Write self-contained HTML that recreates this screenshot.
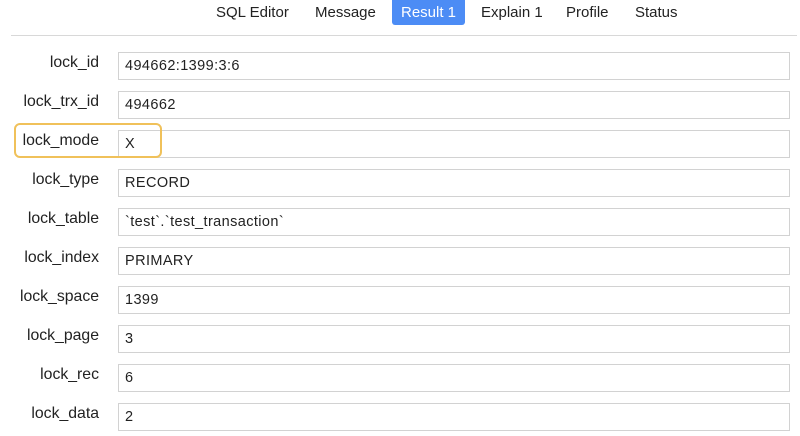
<!DOCTYPE html>
<html><head><meta charset="utf-8"><style>
body{margin:0;width:800px;height:436px;background:#fff;font-family:"Liberation Sans",sans-serif;position:relative;overflow:hidden;color:#222}
.tab{position:absolute;top:4px;font-size:15px;color:#222}
.sel{position:absolute;left:392px;top:0;width:73px;height:25px;background:#4c8cf5;border-radius:0 0 3px 3px;color:#fff;font-size:15px;text-align:center;line-height:26px}
.sep{position:absolute;left:11px;top:35px;width:786px;height:1px;background:#d8d8d8}
.lab{position:absolute;right:701px;font-size:15.8px;color:#222;text-align:right}
.f{position:absolute;left:118px;border:1px solid #d2d2d2;font-size:14.5px;letter-spacing:0.4px;line-height:26px;padding-left:6px;box-sizing:border-box;width:672px;height:28px}
.hl{position:absolute;left:14px;top:123px;width:144px;height:31px;border:2px solid #f0c15a;border-radius:6px}
</style></head><body>
<div class="tab" style="left:216px">SQL Editor</div>
<div class="tab" style="left:315px">Message</div>
<div class="sel">Result 1</div>
<div class="tab" style="left:481px">Explain 1</div>
<div class="tab" style="left:566px">Profile</div>
<div class="tab" style="left:635px">Status</div>
<div class="sep"></div>

<div class="lab" style="top:54px">lock_id</div><div class="f" style="top:52px">494662:1399:3:6</div>
<div class="lab" style="top:93px">lock_trx_id</div><div class="f" style="top:91px">494662</div>
<div class="lab" style="top:132px">lock_mode</div><div class="f" style="top:130px">X</div>
<div class="lab" style="top:171px">lock_type</div><div class="f" style="top:169px">RECORD</div>
<div class="lab" style="top:210px">lock_table</div><div class="f" style="top:208px">`test`.`test_transaction`</div>
<div class="lab" style="top:249px">lock_index</div><div class="f" style="top:247px">PRIMARY</div>
<div class="lab" style="top:288px">lock_space</div><div class="f" style="top:286px">1399</div>
<div class="lab" style="top:327px">lock_page</div><div class="f" style="top:325px">3</div>
<div class="lab" style="top:366px">lock_rec</div><div class="f" style="top:364px">6</div>
<div class="lab" style="top:405px">lock_data</div><div class="f" style="top:403px">2</div>
<div class="hl"></div>
</body></html>
